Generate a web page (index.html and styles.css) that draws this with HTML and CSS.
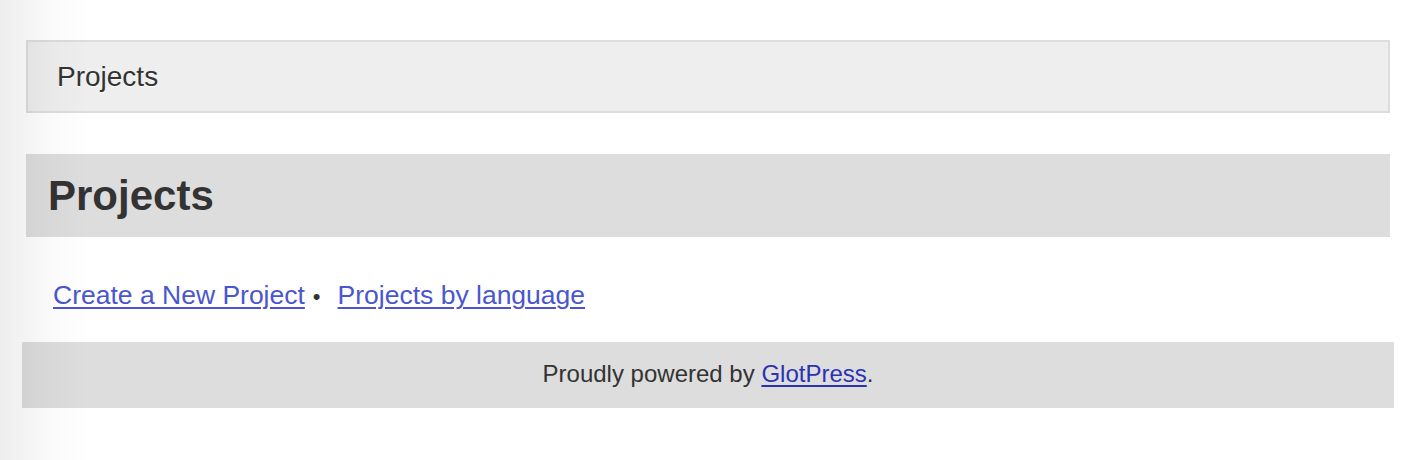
FILE: index.html
```html
<!DOCTYPE html>
<html lang="en">
<head>
<meta charset="utf-8">
<title>Projects &lt; GlotPress</title>
<link rel="stylesheet" href="styles.css">
</head>
<body>
<div class="page">
  <main class="main">
    <nav class="breadcrumb"><span class="crumb">Projects</span></nav>
    <h1 class="title">Projects</h1>
    <p class="actions">
      <a href="#" class="link">Create a New Project</a><span class="sep">&bull;</span><a href="#" class="link">Projects by language</a>
    </p>
  </main>
  <footer class="footer">Proudly powered by <a href="#" class="footer-link">GlotPress</a>.</footer>
</div>
</body>
</html>
```

FILE: styles.css
```css
html, body {
  margin: 0;
  padding: 0;
  background: #fff;
}

body {
  font-family: "Liberation Sans", Arial, sans-serif;
  color: #333;
  position: relative;
  min-height: 460px;
}

body::before {
  content: "";
  position: fixed;
  top: 0;
  left: 0;
  bottom: 0;
  width: 90px;
  background: linear-gradient(to right, rgba(0, 0, 0, 0.07), rgba(0, 0, 0, 0.02) 55%, rgba(0, 0, 0, 0));
  pointer-events: none;
  z-index: 10;
}

.page {
  padding: 40px 24px 0 22px;
}

.main {
  margin: 0 4px;
}

.breadcrumb {
  background: #eee;
  border: 2px solid #ddd;
  padding: 0 29px;
  height: 69px;
  line-height: 69px;
  font-size: 28px;
}

.crumb {
  color: #333;
  text-shadow: 0 1px 0 #fff;
}

.title {
  margin: 41px 0 0;
  background: #ddd;
  height: 83px;
  line-height: 83px;
  padding: 0 22px;
  font-size: 42px;
  font-weight: bold;
  color: #333;
}

.actions {
  margin: 43px 0 30px;
  padding-left: 27px;
  font-size: 26.5px;
  line-height: 31px;
}

.link {
  color: #4a56cf;
  text-decoration: underline;
  text-underline-offset: 3px;
  text-decoration-thickness: 2px;
}

.sep {
  color: #333;
  font-size: 22px;
  margin: 0 17px 0 8px;
}

.footer {
  background: #ddd;
  height: 66px;
  line-height: 64px;
  text-align: center;
  font-size: 24px;
  color: #333;
}

.footer-link {
  color: #2a33b3;
  text-decoration: underline;
  text-underline-offset: 3px;
  text-decoration-thickness: 2px;
}
```
